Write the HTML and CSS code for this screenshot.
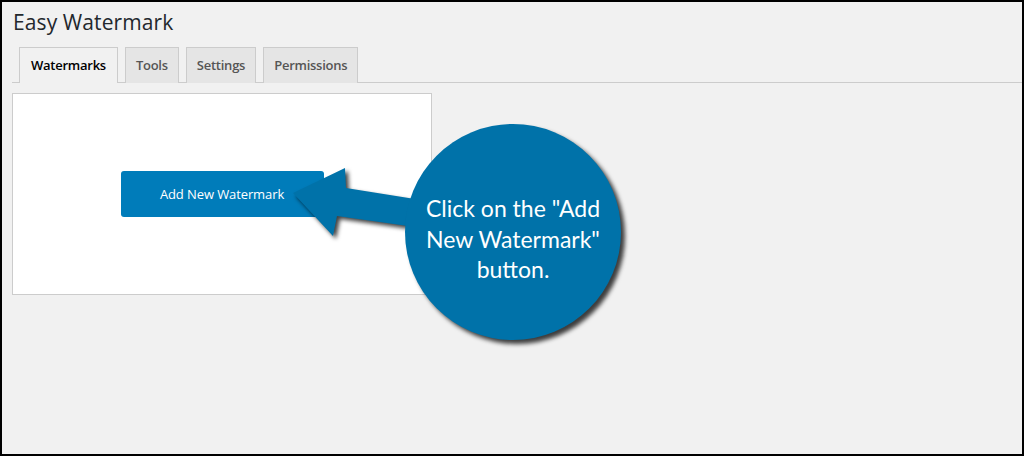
FILE: index.html
```html
<!DOCTYPE html>
<html lang="en">

<head>
  <meta charset="UTF-8">
  <meta name="viewport" content="width=device-width, initial-scale=1.0">
  <title>Easy Watermark</title>
  <link rel="stylesheet" href="styles.css">
</head>

<body>
  <div class="frame">
    <div class="wrap">
      <h1 class="title">Easy Watermark</h1>
      <nav class="tabs">
        <a class="tab active">Watermarks</a>
        <a class="tab">Tools</a>
        <a class="tab">Settings</a>
        <a class="tab">Permissions</a>
      </nav>
      <div class="panel">
        <button class="add-btn">Add New Watermark</button>
      </div>
    </div>
  </div>

  <div class="callout">
    <svg class="arrow" width="1024" height="456" viewBox="0 0 1024 456">
      <polygon points="293,193 345,168 346,188 440,203 436,230 337,216 333,236" fill="#0072a9"></polygon>
    </svg>
    <div class="bubble">
      <p>Click on the "Add<br>New Watermark"<br>button.</p>
    </div>
  </div>
</body>

</html>
```

FILE: styles.css
```css
body {
  margin: 0;
  padding: 0;
  position: relative;
  font-family: "Open Sans", "Noto Sans", sans-serif;
}

.frame {
  box-sizing: border-box;
  width: 1024px;
  height: 456px;
  border: 2px solid #000;
  background: #f1f1f1;
}

.wrap {
  margin-left: 10px;
}

.title {
  margin: 0;
  padding: 5px 0 0 1px;
  height: 40px;
  font-size: 21px;
  font-weight: 400;
  line-height: 30px;
  letter-spacing: 0.1px;
  color: #23282d;
}

.tabs {
  display: flex;
  gap: 7px;
  padding-left: 7px;
  border-bottom: 1px solid #ccc;
  height: 35px;
}

.tab {
  box-sizing: border-box;
  height: 36px;
  padding: 5px 10px;
  border: 1px solid #ccc;
  border-bottom: none;
  background: #e5e5e5;
  color: #555;
  font-size: 13px;
  font-weight: 600;
  line-height: 24px;
  letter-spacing: -0.25px;
}

.active {
  background: #f1f1f1;
  color: #000;
  padding: 5px 11px;
}

.panel {
  box-sizing: border-box;
  margin-top: 10px;
  width: 420px;
  height: 202px;
  border: 1px solid #ccc;
  background: #fff;
  display: flex;
  align-items: center;
  justify-content: center;
}

.add-btn {
  width: 203px;
  height: 46px;
  border: none;
  border-radius: 3px;
  background: #007cba;
  color: #fff;
  font-family: "Open Sans", "Noto Sans", sans-serif;
  font-size: 13px;
  letter-spacing: -0.1px;
  padding: 0;
}

.callout {
  position: absolute;
  top: 0;
  left: 0;
  width: 1024px;
  height: 456px;
  pointer-events: none;
}

.arrow {
  position: absolute;
  top: 0;
  left: 0;
  filter: drop-shadow(3px 3px 2px rgba(0, 0, 0, 0.75));
}

.bubble {
  position: absolute;
  left: 405px;
  top: 124px;
  width: 216px;
  height: 216px;
  border-radius: 50%;
  background: #0072a9;
  box-shadow: 4px 4px 4px rgba(0, 0, 0, 0.75);
  display: flex;
  align-items: center;
  justify-content: center;
}

.bubble p {
  margin: 14px 0 0 0;
  color: #fff;
  text-align: center;
  font-family: "Lato", "Open Sans", sans-serif;
  font-size: 23px;
  line-height: 30.5px;
}
```
